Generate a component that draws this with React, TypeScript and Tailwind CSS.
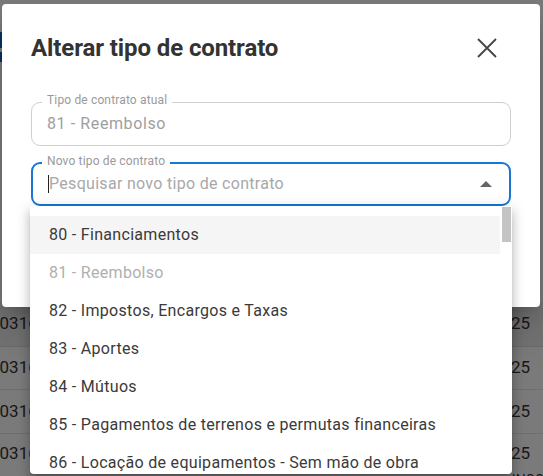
import React from "react";

const items = [
  { t: "80 - Financiamentos", hl: true },
  { t: "81 - Reembolso", dis: true },
  { t: "82 - Impostos, Encargos e Taxas" },
  { t: "83 - Aportes" },
  { t: "84 - Mútuos" },
  { t: "85 - Pagamentos de terrenos e permutas financeiras" },
  { t: "86 - Locação de equipamentos - Sem mão de obra" },
  { t: "87 - Outros" },
];

export default function App() {
  return (
    <div
      className="relative w-[543px] h-[476px] overflow-hidden bg-[#f4f4f4]"
      style={{ fontFamily: "Roboto, 'Liberation Sans', sans-serif" }}
    >
      {/* background page */}
      <div className="flex flex-col w-full">
        <div className="h-[302px] w-full flex flex-col pt-[32px]">
          <div className="h-[16px] w-[3px] bg-[#1565c0]"></div>
          <div className="h-[4px]"></div>
          <div className="h-[10px] w-[3px] bg-[#1565c0]"></div>
        </div>
        <div className="h-[45px] bg-[#e6e6e6] border-b border-[#d6d6d6] flex items-center justify-between text-[17px] text-[#333]">
          <span className="ml-[-10px]">20316</span>
          <span className="mr-[13px]">2025</span>
        </div>
        <div className="h-[43px] bg-[#f4f4f4] border-b border-[#dcdcdc] flex items-center justify-between text-[17px] text-[#333]">
          <span className="ml-[-10px]">20316</span>
          <span className="mr-[13px]">2025</span>
        </div>
        <div className="h-[44px] bg-[#f4f4f4] border-b border-[#dcdcdc] flex items-center justify-between text-[17px] text-[#333]">
          <span className="ml-[-10px]">20316</span>
          <span className="mr-[13px]">2025</span>
        </div>
        <div className="h-[40px] bg-[#f4f4f4] flex items-center justify-between text-[17px] text-[#333]">
          <span className="ml-[-10px]">20316</span>
          <span className="mr-[13px]">2025</span>
        </div>
        <div className="flex justify-end mt-[-4px] text-[14px] text-[#333] mr-[-10px]">INCOR</div>
      </div>

      {/* overlay */}
      <div className="absolute inset-0 bg-black/50"></div>

      {/* dialog */}
      <div className="absolute left-[2px] top-[4px] w-[538px] h-[303px] bg-white rounded-[4px] shadow-[0_11px_15px_-7px_rgba(0,0,0,0.2),0_24px_38px_3px_rgba(0,0,0,0.14)]">
        <div className="flex flex-col px-[29px] pt-[24px]">
          <div className="flex items-center justify-between h-[40px]">
            <h2 className="text-[24px] font-bold text-[#333] tracking-[-0.1px]">Alterar tipo de contrato</h2>
            <button className="w-[40px] h-[40px] flex items-center justify-center mr-[4px]">
              <svg width="24" height="24" viewBox="0 0 24 24">
                <path d="M3 3 L21 21 M21 3 L3 21" stroke="#444" strokeWidth="1.8" fill="none" />
              </svg>
            </button>
          </div>

          <div className="relative mt-[34px] h-[44px] rounded-[9px] border border-[#cfcfcf] flex items-center px-[15px]">
            <span className="absolute left-[10px] top-[-10px] px-[5px] bg-white text-[12px] leading-[14px] tracking-[0.15px] text-[#9a9a9a]">
              Tipo de contrato atual
            </span>
            <span className="text-[16px] tracking-[0.6px] text-[#9e9e9e]">81 - Reembolso</span>
          </div>

          <div className="relative mt-[16px] h-[44px] rounded-[9px] border-2 border-[#1976d2] flex items-center pl-[15px] pr-[17px]">
            <span className="absolute left-[9px] top-[-10px] px-[5px] bg-white text-[12px] leading-[14px] tracking-[0.15px] text-[#9a9a9a]">
              Novo tipo de contrato
            </span>
            <span className="w-[1px] h-[18px] bg-[#222]"></span>
            <span className="text-[16px] tracking-[0.3px] text-[#a8a8a8] flex-1">Pesquisar novo tipo de contrato</span>
            <svg width="12" height="6" viewBox="0 0 12 6">
              <path d="M0 6 L6 0 L12 6 Z" fill="#666" />
            </svg>
          </div>
        </div>
      </div>

      {/* dropdown */}
      <div className="absolute left-[30px] top-[206px] w-[482px] h-[268px] bg-white rounded-b-[4px] shadow-[0_5px_5px_-3px_rgba(0,0,0,0.2),0_8px_10px_1px_rgba(0,0,0,0.14),0_3px_14px_2px_rgba(0,0,0,0.12)] flex overflow-hidden">
        <div className="flex-1 flex flex-col pt-[10px]">
          {items.map((it) => (
            <div
              key={it.t}
              className={
                "h-[38px] shrink-0 flex items-center pl-[19px] text-[16px] tracking-[0.3px] " +
                (it.hl ? "bg-[#f5f5f5] " : "") +
                (it.dis ? "text-[#b0b0b0]" : "text-[#3a3a3a]")
              }
            >
              {it.t}
            </div>
          ))}
        </div>
        <div className="w-[12px] flex flex-col pt-[1px] pl-[2px] pr-[1px]">
          <div className="h-[35px] bg-[#c4c4c4]"></div>
        </div>
      </div>
    </div>
  );
}
